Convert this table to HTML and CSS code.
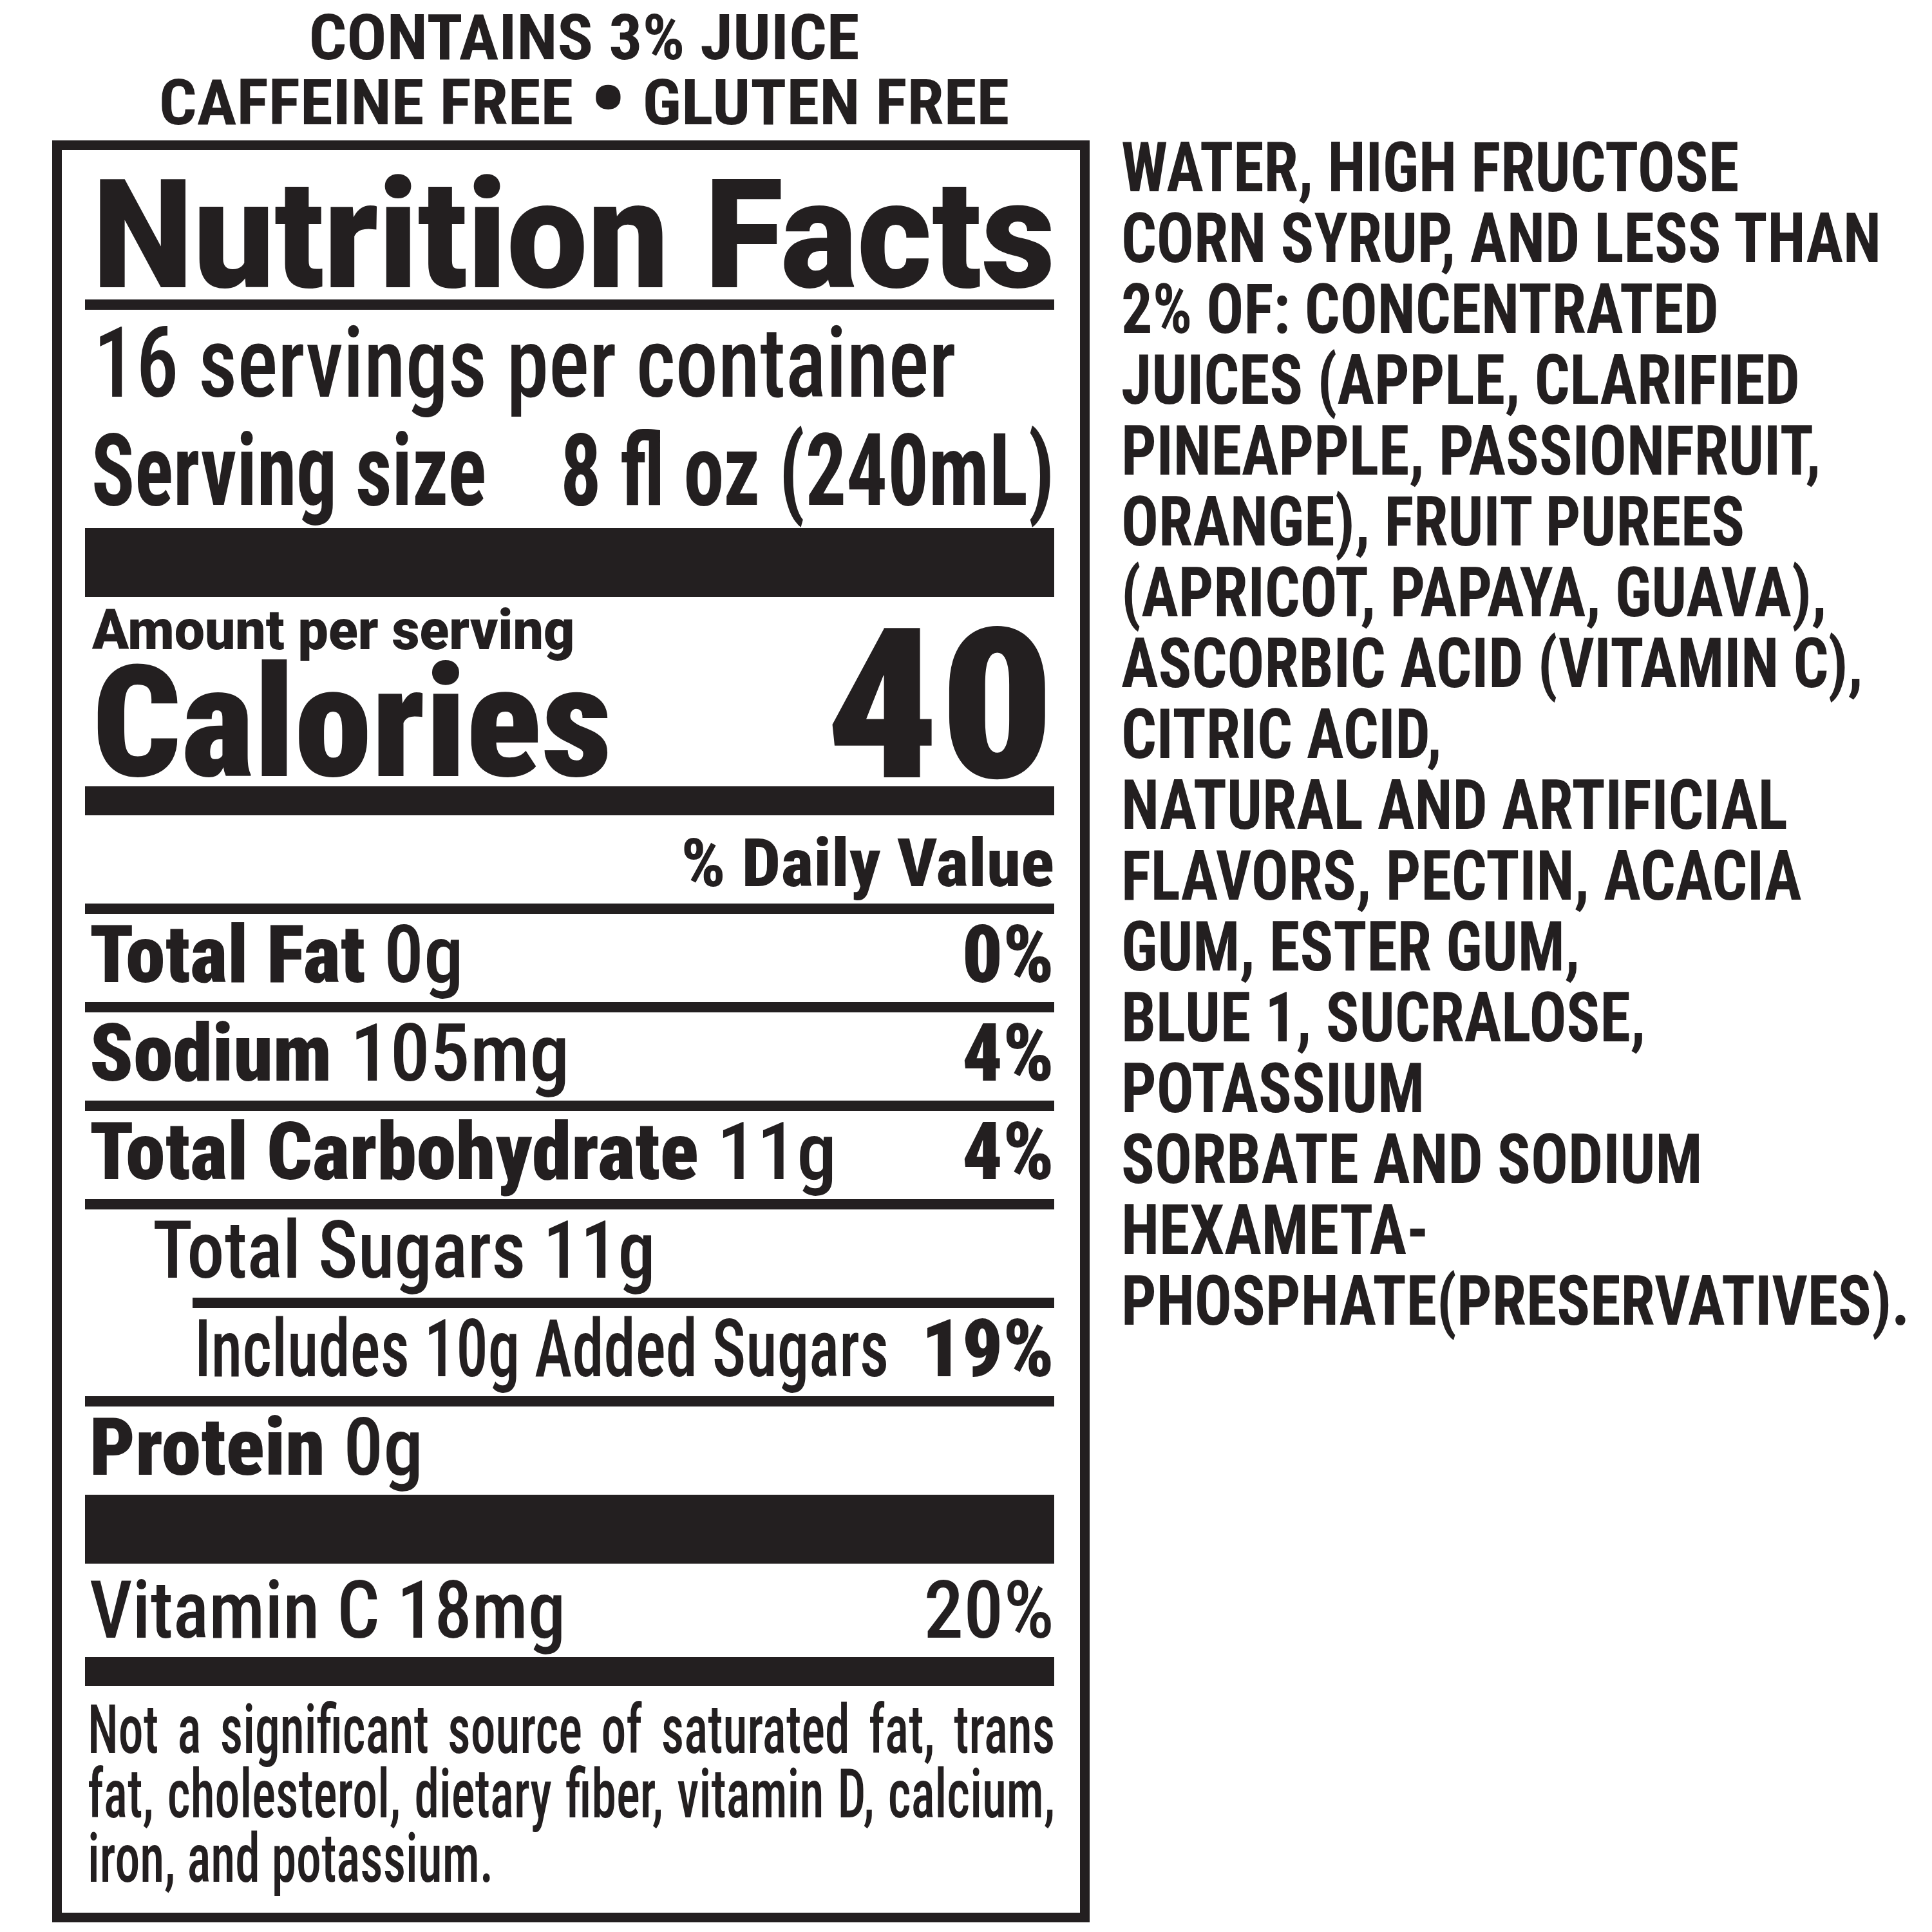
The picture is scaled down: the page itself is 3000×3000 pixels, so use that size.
FILE: index.html
```html
<!DOCTYPE html>
<html lang="en">
<head>
<meta charset="utf-8">
<title>Nutrition Facts</title>
<link rel="stylesheet" href="styles.css">
</head>
<body>
<div class="page">
  <div class="left">
    <div class="claims">
      <div class="claim"><span>CONTAINS 3% JUICE</span></div>
      <div class="claim"><span>CAFFEINE FREE <span class="dot">•</span> GLUTEN FREE</span></div>
    </div>
    <section class="facts">
      <h1 class="title">Nutrition Facts</h1>
      <div class="rule"></div>
      <div class="servings">16 servings per container</div>
      <div class="size"><span class="lbl">Serving size</span><span class="qty">8 fl oz (240mL)</span></div>
      <div class="bar-thick"></div>
      <div class="cal">
        <div class="cal-left">
          <div class="amount">Amount per serving</div>
          <div class="cal-label">Calories</div>
        </div>
        <div class="cal-num">40</div>
      </div>
      <div class="bar-med"></div>
      <div class="dv-head"><span class="dv-text">% Daily Value</span></div>
      <div class="rule"></div>
      <div class="row"><span class="lbl"><b>Total Fat</b> 0g</span><b class="pct">0%</b></div>
      <div class="rule"></div>
      <div class="row"><span class="lbl"><b>Sodium</b> 105mg</span><b class="pct">4%</b></div>
      <div class="rule"></div>
      <div class="row"><span class="lbl"><b>Total Carbohydrate</b> 11g</span><b class="pct">4%</b></div>
      <div class="rule"></div>
      <div class="row sub"><span class="lbl narrow">Total Sugars 11g</span></div>
      <div class="rule indent"></div>
      <div class="row sub2"><span class="lbl added">Includes 10g Added Sugars</span><b class="pct">19%</b></div>
      <div class="rule"></div>
      <div class="row"><span class="lbl"><b>Protein</b> 0g</span></div>
      <div class="bar-thick"></div>
      <div class="row vit"><span class="lbl narrow">Vitamin C 18mg</span><span class="pct">20%</span></div>
      <div class="bar-med"></div>
      <div class="foot">
        <div class="foot-text">
          <div class="j">Not a significant source of saturated fat, trans</div>
          <div class="j">fat, cholesterol, dietary fiber, vitamin D, calcium,</div>
          <div>iron, and potassium.</div>
        </div>
      </div>
    </section>
  </div>
  <p class="ingredients">WATER, HIGH FRUCTOSE<br>CORN SYRUP, AND LESS THAN<br>2% OF: CONCENTRATED<br>JUICES (APPLE, CLARIFIED<br>PINEAPPLE, PASSIONFRUIT,<br>ORANGE), FRUIT PUREES<br>(APRICOT, PAPAYA, GUAVA),<br>ASCORBIC ACID (VITAMIN C),<br>CITRIC ACID,<br>NATURAL AND ARTIFICIAL<br>FLAVORS, PECTIN, ACACIA<br>GUM, ESTER GUM,<br>BLUE 1, SUCRALOSE,<br>POTASSIUM<br>SORBATE AND SODIUM<br>HEXAMETA-<br>PHOSPHATE(PRESERVATIVES).</p>
</div>
</body>
</html>
```
FILE: styles.css
```css
* { box-sizing: border-box; }

body {
  margin: 0;
  background: #ffffff;
  color: #231f20;
  font-family: Roboto, "Liberation Sans", sans-serif;
}

.page {
  display: flex;
  align-items: flex-start;
  padding-left: 81px;
}

.left {
  width: 1611px;
  flex: none;
}

/* claims above the panel */
.claims {
  padding: 8px 0 0 41px;
  margin-bottom: 8px;
  font-size: 98px;
  line-height: 101px;
  font-weight: 700;
  font-stretch: 75%;
}

.claim {
  display: flex;
  justify-content: center;
  white-space: nowrap;
  transform: scaleX(1.055);
  transform-origin: 50% 50%;
}

.claim .dot {
  font-size: 1.6em;
  line-height: 0;
  position: relative;
  top: 0.1em;
}

/* the panel */
.facts {
  border: 15px solid #231f20;
  padding: 33px 40px 33px 36px;
  white-space: nowrap;
}

.title {
  margin: 0;
  padding-left: 12px;
  font-size: 236px;
  line-height: 199px;
  font-weight: 900;
  font-stretch: 100%;
  transform: scaleX(0.946);
  transform-origin: 0 50%;
}

.rule { height: 16px; background: #231f20; }
.rule.indent { margin-left: 167px; }
.bar-thick { height: 107px; background: #231f20; }
.bar-med { height: 45px; background: #231f20; }

.servings {
  padding-left: 15px;
  font-size: 152px;
  line-height: 166px;
  font-weight: 500;
  font-stretch: 75%;
  transform: scaleX(0.872);
  transform-origin: 0 50%;
}

.size {
  display: flex;
  justify-content: space-between;
  padding: 0 0 6px 10px;
  font-size: 156px;
  line-height: 167px;
  font-weight: 700;
  font-stretch: 75%;
}

.size .lbl {
  min-width: 0;
  flex: 0 1 auto;
  transform: scaleX(0.80);
  transform-origin: 0 50%;
}

.size .qty {
  flex: none;
  transform: scaleX(0.81);
  transform-origin: 100% 50%;
}

.cal {
  display: flex;
  justify-content: space-between;
  align-items: flex-end;
  padding-bottom: 6px;
  font-weight: 900;
}

.cal-left { padding-left: 11px; }

.amount {
  font-size: 88px;
  line-height: 102px;
  font-stretch: 100%;
  transform: scaleX(0.955);
  transform-origin: 0 50%;
}

.cal-label {
  font-size: 242px;
  line-height: 186px;
  font-stretch: 75%;
}

.cal-num {
  font-size: 326px;
  line-height: 237px;
  font-stretch: 75%;
  transform: scaleX(1.068);
  transform-origin: 100% 50%;
}

.dv-head {
  text-align: right;
  padding-top: 13px;
  font-size: 103px;
  line-height: 124px;
  font-weight: 800;
  font-stretch: 75%;
}

.dv-text {
  display: inline-block;
  transform: scaleX(1.05);
  transform-origin: 100% 50%;
}

.row {
  display: flex;
  justify-content: space-between;
  padding: 2px 0 11px 7px;
  font-size: 124px;
  line-height: 124px;
  font-weight: 500;
  font-stretch: 75%;
}

.row b { font-weight: 900; }

.row .lbl {
  min-width: 0;
  flex: 0 1 auto;
  transform-origin: 0 50%;
}

.row .pct { flex: none; }

.row .lbl.narrow { transform: scaleX(0.94); }
.row .lbl.added { transform: scaleX(0.80); }

.row.sub { padding-left: 105px; }
.row.sub2 { padding-left: 170px; }
.row.vit { padding: 0 0 0 7px; line-height: 145px; }

.foot {
  padding: 19px 0 0 4px;
  font-size: 105px;
  line-height: 100px;
  font-weight: 500;
  font-stretch: 75%;
}

.foot-text {
  width: 2030px;
  transform: scaleX(0.74);
  transform-origin: 0 50%;
}

.foot-text .j {
  text-align: justify;
  text-align-last: justify;
}

/* ingredients column */
.ingredients {
  margin: 0 0 0 49px;
  padding-top: 206px;
  font-size: 107px;
  line-height: 110px;
  font-weight: 700;
  font-stretch: 75%;
  white-space: nowrap;
  transform: scaleX(0.90);
  transform-origin: 0 0;
}
```
